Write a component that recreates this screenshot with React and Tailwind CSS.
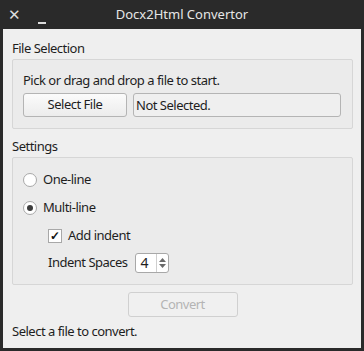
import React from "react";

const font = { fontFamily: '"Noto Sans", "Open Sans", sans-serif' };

const Radio = ({ checked, label }) => (
  <div className="flex items-center h-[20px]">
    <span className="w-[14px] h-[14px] rounded-full border border-[#a8a8a8] bg-white flex items-center justify-center">
      {checked && <span className="w-[6px] h-[6px] rounded-full bg-[#3c3c3c]" />}
    </span>
    <span className="ml-[6px]">{label}</span>
  </div>
);

const App = () => {
  return (
    <div
      className="w-[364px] h-[351px] bg-[#2a2a2a] flex flex-col text-[13px] text-[#1e1e1e]"
      style={font}
    >
      {/* title bar */}
      <div className="h-[29px] flex items-center relative text-[#e6e6e6]">
        <span className="absolute left-[8px] top-[7px] text-[15px] leading-[15px] text-[#dcdcdc]">✕</span>
        <span className="absolute left-[38px] top-[22px] w-[8px] h-[2px] bg-[#dcdcdc]" />
        <div className="flex-1 text-center pt-[1px]">Docx2Html Convertor</div>
      </div>

      {/* body */}
      <div className="flex-1 mx-[3px] mb-[3px] bg-[#efefef] pl-[9px] pr-[8px] pt-[9px] flex flex-col tracking-[-0.5px]">
        <div className="h-[20px] leading-[20px]">File Selection</div>
        <div className="mt-[1px] h-[70px] border border-[#d6d6d6] rounded-[2px] bg-[#ebebeb] px-[10px] pt-[11px]">
          <div className="h-[18px] leading-[18px]">Pick or drag and drop a file to start.</div>
          <div className="mt-[4px] flex gap-[6px]">
            <button className="w-[104px] h-[24px] rounded-[3px] border border-[#b4b4b4] bg-gradient-to-b from-[#fbfbfb] to-[#ececec] text-[#1e1e1e]">
              Select File
            </button>
            <div className="w-[208px] h-[24px] rounded-[3px] border border-[#b4b4b4] bg-[#efefef] leading-[22px] pl-[2px]">
              Not Selected.
            </div>
          </div>
        </div>

        <div className="mt-[7px] h-[20px] leading-[20px]">Settings</div>
        <div className="mt-[1px] h-[128px] border border-[#d6d6d6] rounded-[2px] bg-[#ebebeb] pl-[10px] pt-[12px]">
          <Radio label="One-line" />
          <div className="mt-[8px]">
            <Radio checked label="Multi-line" />
          </div>
          <div className="mt-[8px] ml-[25px] flex items-center h-[20px]">
            <span className="w-[14px] h-[14px] border border-[#a8a8a8] bg-white flex items-center justify-center text-[12px] leading-none font-bold text-[#111]">
              ✓
            </span>
            <span className="ml-[6px]">Add indent</span>
          </div>
          <div className="mt-[7px] ml-[25px] flex items-center h-[20px]">
            <span>Indent Spaces</span>
            <div className="ml-[7px] w-[34px] h-[20px] rounded-[3px] border border-[#a8a8a8] bg-white flex">
              <span className="w-[20px] pl-[5px] leading-[18px] text-[14px]">4</span>
              <span className="flex-1 border-l border-[#cfcfcf] flex flex-col items-center justify-center gap-[2px]">
                <svg width="7" height="4" viewBox="0 0 7 4"><path d="M0 4L3.5 0L7 4Z" fill="#6a6a6a" /></svg>
                <svg width="7" height="4" viewBox="0 0 7 4"><path d="M0 0L3.5 4L7 0Z" fill="#6a6a6a" /></svg>
              </span>
            </div>
          </div>
        </div>

        <div className="mt-[7px] flex justify-center">
          <button className="w-[110px] h-[25px] rounded-[3px] border border-[#d0d0d0] bg-[#f0f0f0] text-[#b4b4b4]">
            Convert
          </button>
        </div>
        <div className="mt-[5px] h-[18px] leading-[18px]">Select a file to convert.</div>
      </div>
    </div>
  );
};

export default App;
